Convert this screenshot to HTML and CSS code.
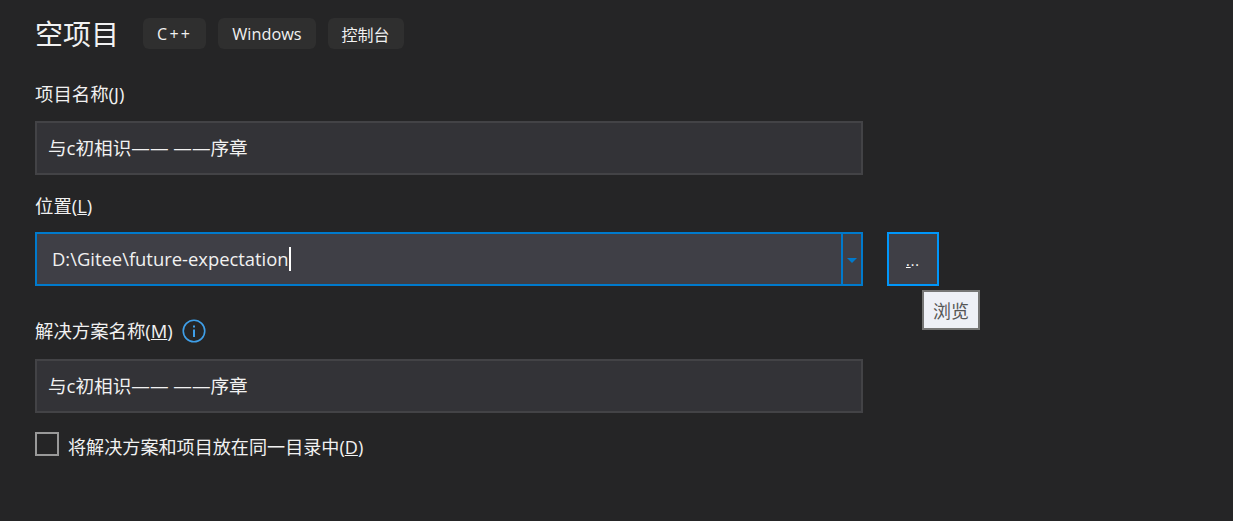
FILE: index.html
```html
<!DOCTYPE html>
<html lang="zh-CN">
<head>
<meta charset="utf-8">
<title>空项目</title>
<link rel="stylesheet" href="styles.css">
</head>
<body>
<main class="page">
  <header class="head">
    <h1 class="title">空项目</h1>
    <div class="tags">
      <span class="tag tag-cpp">C++</span>
      <span class="tag tag-win">Windows</span>
      <span class="tag">控制台</span>
    </div>
  </header>

  <div class="label label-name">项目名称(<u>J</u>)</div>
  <div class="field">与c初相识—— ——序章</div>

  <div class="label label-loc">位置(<u>L</u>)</div>
  <div class="loc-row">
    <div class="combo">
      <div class="combo-text">D:\Gitee\future-expectation<span class="caret"></span></div>
      <div class="combo-btn"><span class="arrow"></span></div>
    </div>
    <div class="browse">
      <span class="dots"><u>.</u>..</span>
      <div class="tooltip">浏览</div>
    </div>
  </div>

  <div class="label label-sol">
    <span>解决方案名称(<u>M</u>)</span>
    <svg class="info" width="24" height="24" viewBox="0 0 24 24" aria-hidden="true">
      <circle cx="12" cy="12" r="10.75" fill="none" stroke="#3f9fe8" stroke-width="1.6"/>
      <rect x="11" y="10.5" width="2" height="7.5" fill="#3f9fe8"/>
      <rect x="11" y="6.5" width="2" height="2" fill="#3f9fe8"/>
    </svg>
  </div>
  <div class="field field-sol">与c初相识—— ——序章</div>

  <label class="check-row">
    <span class="check"></span>
    <span class="check-text">将解决方案和项目放在同一目录中(<u>D</u>)</span>
  </label>
</main>
</body>
</html>
```

FILE: styles.css
```css
* { box-sizing: border-box; }
html, body { margin: 0; height: 100%; }
body {
  background: #252526;
  color: #f1f1f1;
  font-family: "Open Sans", "Noto Sans CJK SC", sans-serif;
  font-size: 18px;
  overflow: hidden;
}
.page {
  width: 1233px;
  height: 521px;
  padding: 18px 0 0 35px;
}
.head { display: flex; align-items: center; height: 31px; }
.title {
  margin: 2px 24px 0 0;
  font-size: 28px;
  font-weight: 400;
  line-height: 31px;
}
.tags { display: flex; gap: 12px; }
.tag {
  height: 31px;
  padding: 0 14px;
  display: flex;
  align-items: center;
  background: #2f2f2f;
  border-radius: 6px;
  font-size: 16px;
}
.tag-cpp { letter-spacing: 2.3px; }
.tag-win { font-size: 16.3px; }
.label { font-size: 18.4px; line-height: 24px; }
.label-name { margin-top: 33px; }
.label-loc { margin-top: 19px; }
.label-sol {
  margin-top: 33px;
  display: flex;
  align-items: center;
  gap: 9px;
}
.field {
  margin-top: 15px;
  width: 828px;
  height: 54px;
  padding: 0 11px 4px;
  display: flex;
  align-items: center;
  background: #333337;
  border: 2px solid #434346;
  font-size: 18.6px;
  white-space: pre;
}
.field-sol { margin-top: 16px; }
.loc-row { margin-top: 14px; display: flex; gap: 24px; }
.combo {
  width: 828px;
  height: 54px;
  display: flex;
  background: #3f3f46;
  border: 2px solid #007acc;
}
.combo-text {
  flex: 1;
  padding: 0 0 2px 15px;
  display: flex;
  align-items: center;
  font-size: 18.4px;
}
.caret { width: 2px; height: 24px; background: #fff; margin: 2px 0 0 0; }
.combo-btn {
  width: 20px;
  border-left: 2px solid #007acc;
  display: flex;
  align-items: center;
  justify-content: center;
}
.arrow {
  width: 0;
  height: 0;
  margin-top: 2px;
  border-left: 5px solid transparent;
  border-right: 5px solid transparent;
  border-top: 5px solid #007acc;
}
.browse {
  position: relative;
  width: 52px;
  height: 54px;
  background: #3f3f46;
  border: 2px solid #0097fb;
  display: flex;
  align-items: center;
  justify-content: center;
  font-size: 14px;
  color: #fff;
}
.dots { line-height: 14px; margin-top: 4px; letter-spacing: 1px; }
.tooltip {
  position: absolute;
  left: 33px;
  top: 56px;
  width: 58px;
  height: 40px;
  display: flex;
  align-items: center;
  justify-content: center;
  background: #eef0f7;
  border: 2px solid #767676;
  color: #575757;
  font-size: 18px;
  letter-spacing: 0;
}
.check-row {
  margin-top: 19px;
  display: flex;
  align-items: flex-start;
  gap: 9px;
  font-size: 18.1px;
}
.check-text { margin-top: 3px; line-height: 24px; }
.check {
  width: 24px;
  height: 24px;
  border: 2px solid #999;
  background: #252526;
}
```
